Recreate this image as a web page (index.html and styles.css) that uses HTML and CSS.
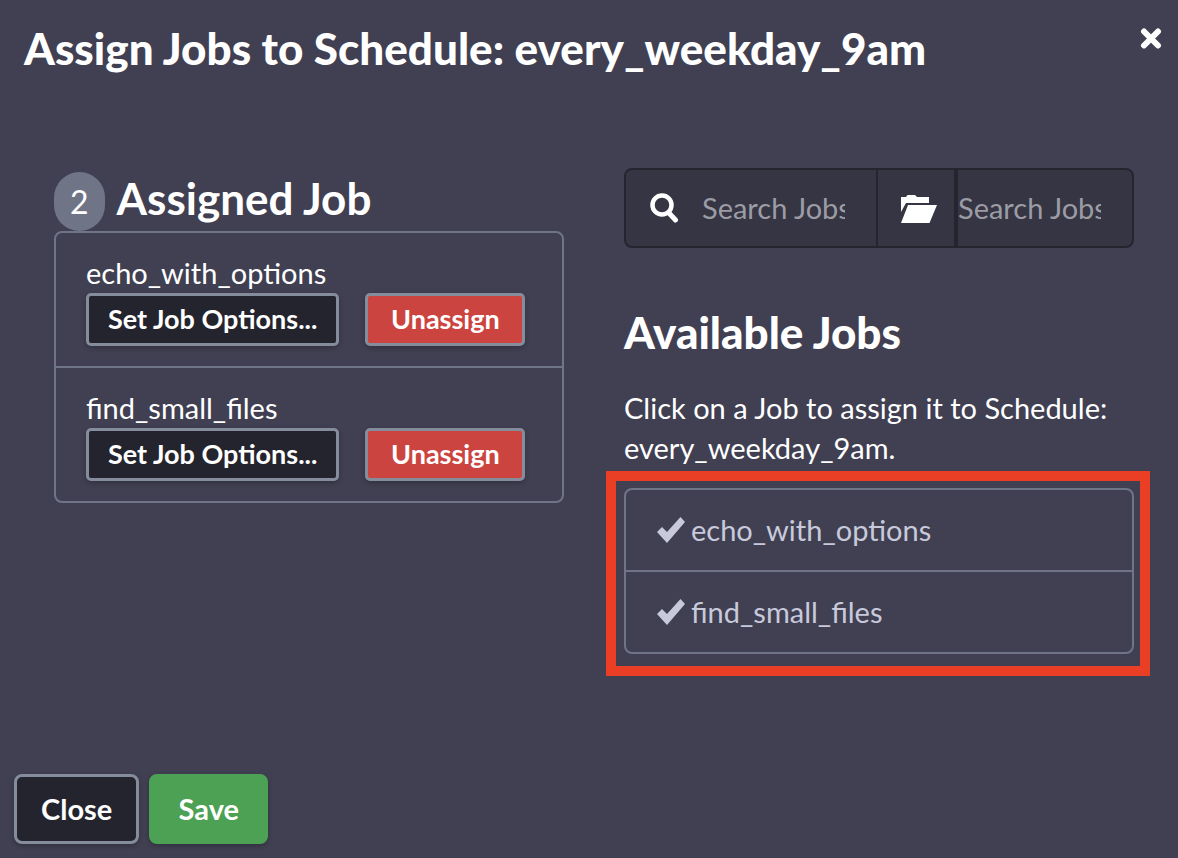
FILE: index.html
```html
<!DOCTYPE html>
<html lang="en">
<head>
  <meta charset="UTF-8">
  <meta name="viewport" content="width=device-width, initial-scale=1.0">
  <title>Assign Jobs to Schedule</title>
  <link rel="stylesheet" href="styles.css">
</head>
<body>

  <div class="modal">
    <header class="modal-header">
      <h1>Assign Jobs to Schedule: every_weekday_9am</h1>
      <button type="button" class="close-icon" aria-label="Close dialog">
        <svg width="24" height="24" viewBox="0 0 24 24"><path d="M4 5.500L18 19.500M18 5.500L4 19.500" stroke="#fff" stroke-width="6" stroke-linecap="round"/></svg>
      </button>
    </header>

    <main class="columns">
      <section>
        <h2 class="assigned-title"><span class="badge">2</span>Assigned Job</h2>
        <ul class="job-list">
          <li class="assigned">
            <div>echo_with_options</div>
            <div class="actions">
              <button type="button" class="btn small dark">Set Job Options...</button>
              <button type="button" class="btn small red">Unassign</button>
            </div>
          </li>
          <li class="assigned">
            <div>find_small_files</div>
            <div class="actions">
              <button type="button" class="btn small dark">Set Job Options...</button>
              <button type="button" class="btn small red">Unassign</button>
            </div>
          </li>
        </ul>
      </section>

      <section>
        <form class="search">
          <label for="jobSearch" class="search-icon" aria-label="Search jobs">
            <svg width="28" height="30" viewBox="0 0 28 30" fill="none" stroke="#fff"><circle cx="12" cy="12" r="9.5" stroke-width="4.5"/><path d="M18.5 19.5L25.5 27" stroke-width="5" stroke-linecap="round"/></svg>
          </label>
          <input type="text" id="jobSearch" placeholder="Search Jobs...">
          <label for="folderSearch" class="folder-icon" aria-label="Search folders">
            <svg width="36" height="28" viewBox="0 0 36 28" fill="#fff"><path d="M0 17V2H5L6.500 0H14L16 2H28V8H5Z"/><path d="M7 10H36L28.500 28H0Z"/></svg>
          </label>
          <input type="text" id="folderSearch" placeholder="Search Jobs...">
        </form>

        <h2 class="available-title">Available Jobs</h2>
        <p>Click on a Job to assign it to Schedule: every_weekday_9am.</p>

        <div class="highlight">
          <ul class="job-list">
            <li class="available">
              <svg width="28" height="26" viewBox="0 0 28 26" fill="#c8cadc"><path d="M0 15L5 10L10 15L23.500 0L28 5L10 26Z"/></svg>
              echo_with_options
            </li>
            <li class="available">
              <svg width="28" height="26" viewBox="0 0 28 26" fill="#c8cadc"><path d="M0 15L5 10L10 15L23.500 0L28 5L10 26Z"/></svg>
              find_small_files
            </li>
          </ul>
        </div>
      </section>
    </main>

    <footer class="modal-footer">
      <button type="button" class="btn dark">Close</button>
      <button type="button" class="btn green">Save</button>
    </footer>
  </div>

</body>
</html>
```
FILE: styles.css
```css
* {
  box-sizing: border-box;
}

body {
  margin: 0;
  background-color: #404052;
  color: #fff;
  font-family: Lato, "Open Sans", sans-serif;
  font-size: 29px;
  line-height: 40px;
}

h1, h2, p, ul {
  margin: 0;
  padding: 0;
}

.modal {
  display: flex;
  flex-direction: column;
  min-height: 100vh;
  padding: 14px;
}

.modal-header {
  display: flex;
  justify-content: space-between;
  align-items: flex-start;
  padding-left: 10px;
}

h1, h2 {
  font-size: 44px;
  line-height: 60px;
  font-weight: 900;
}

h1 {
  padding-top: 4px;
}

.close-icon {
  display: flex;
  padding: 12px 0;
  border: none;
  background: none;
  cursor: pointer;
}

.columns {
  display: grid;
  grid-template-columns: 1fr 1fr;
  gap: 60px;
  flex: 1;
  padding: 90px 30px 0 40px;
}

.assigned-title {
  display: flex;
  align-items: flex-start;
  gap: 12px;
  padding-top: 4px;
  line-height: 52px;
  font-weight: bold;
}

.badge {
  padding: 0 16px;
  border-radius: 26px;
  background-color: #6f7487;
  font-size: 32px;
  line-height: 59px;
  font-weight: normal;
}

.job-list {
  list-style: none;
  border: 2px solid #6f7487;
  border-radius: 8px;
}

.job-list li + li {
  border-top: 2px solid #6f7487;
}

.assigned {
  padding: 20px 30px;
}

.actions {
  display: flex;
  gap: 26px;
}

.btn {
  padding: 12px 24px;
  border: 3px solid #858c9c;
  border-radius: 8px;
  color: #fff;
  font-family: inherit;
  font-size: 29px;
  line-height: 40px;
  font-weight: bold;
  box-shadow: 0 2px 5px rgba(0, 0, 0, 0.25);
  cursor: pointer;
}

.small {
  padding: 3px 19px 4px;
  border-radius: 5px;
  font-size: 27px;
}

.dark {
  background-color: #24242e;
}

.red {
  min-width: 160px;
  background-color: #cc443f;
}

.green {
  min-width: 119px;
  border-color: #4ca154;
  background-color: #4ca154;
}

.search {
  display: flex;
  height: 80px;
  border: 2px solid #25252f;
  border-radius: 8px;
  background-color: #353543;
}

.search label {
  display: flex;
  align-items: center;
  padding: 0 24px;
}

.search input {
  flex: 1;
  width: 0;
  margin-right: 31px;
  padding: 0;
  border: none;
  outline: none;
  background: none;
  color: #fff;
  font: inherit;
}

.search input::placeholder {
  color: #9c9ca5;
}

.search .folder-icon {
  padding: 2px 17px 0 23px;
  border-left: 2px solid #25252f;
  border-right: 4px solid #25252f;
}

.available-title {
  margin: 54px 0 26px;
}

.highlight {
  margin: 3px -16px 0 -18px;
  padding: 7px 6px 12px 8px;
  border: 10px solid #ea3f25;
}

.available {
  display: flex;
  align-items: center;
  gap: 6px;
  padding: 20px 31px;
  color: #c8cadc;
}

.modal-footer {
  display: flex;
  gap: 10px;
}
```
